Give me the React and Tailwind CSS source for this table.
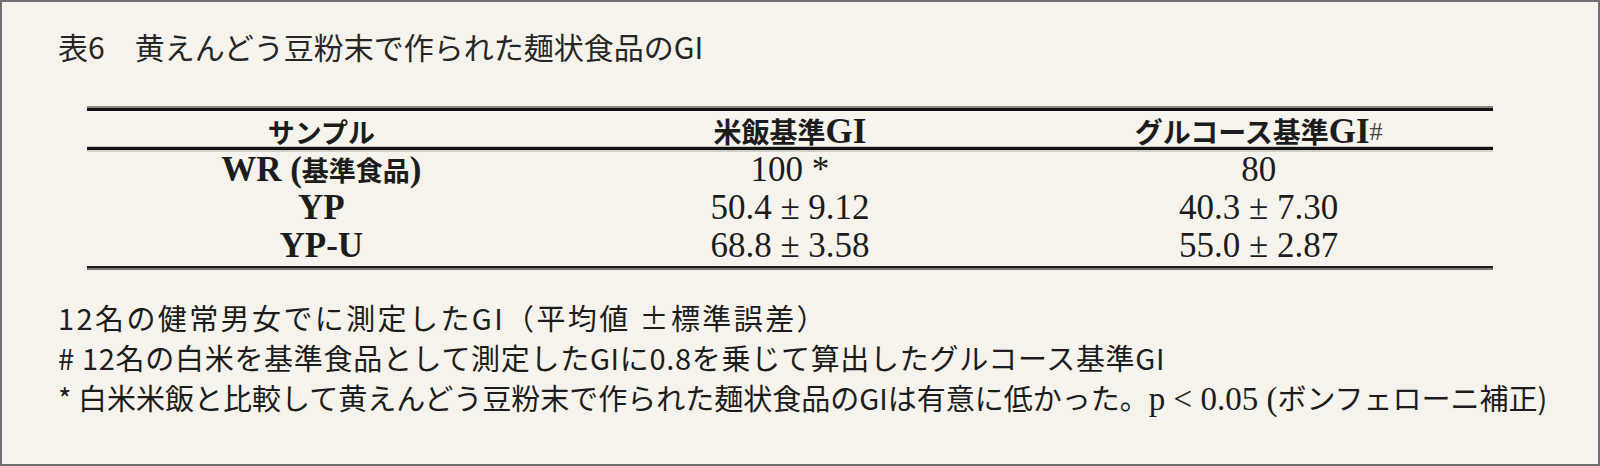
const serif = "[font-family:'Liberation_Serif','Noto_Sans_CJK_JP',serif]";
const gothic = "[font-family:'Noto_Sans_CJK_JP',sans-serif]";

const rows = [
    { label: <>WR <span className="text-[35px]">(</span><span className={`${gothic} text-[27px]`}>基準食品</span><span>)</span></>, rice: "100 *", glucose: "80" },
    { label: "YP", rice: "50.4 ± 9.12", glucose: "40.3 ± 7.30" },
    { label: "YP-U", rice: "68.8 ± 3.58", glucose: "55.0 ± 2.87" },
];

const Rule = ({ parts }) => (
    <div className="flex flex-col">
        {parts.map(([h, c], i) => <div key={i} className={`${h} ${c}`}/>)}
    </div>
);

export default function App() {
    return (
        <div className="w-[1600px] h-[466px] bg-[#f5f3eb] border-2 border-[#6f6f6f] text-[#1c1c1c]">
            <div className={`${gothic} text-[30px] leading-[30px] pl-[56px] pt-[29px] text-[#262626]`}>
                表6　黄えんどう豆粉末で作られた麺状食品のGI
            </div>

            <div className="ml-[85px] mt-[45px] w-[1406px]">
                <Rule parts={[["h-[2px]", "bg-[#8a8880]"], ["h-[3px]", "bg-[#121212]"]]}/>
                <div className="grid grid-cols-3 h-[35px] items-center pt-[3px] font-bold">
                    <div className={`${gothic} text-center text-[27px] leading-none`}>サンプル</div>
                    <div className={`${serif} text-center text-[35px] leading-none`}>
                        <span className={`${gothic} text-[28px]`}>米飯基準</span>GI
                    </div>
                    <div className={`${serif} text-center text-[35px] leading-none`}>
                        <span className={`${gothic} text-[28px]`}>グルコース基準</span>GI<span className="text-[26px] font-normal text-[#444] relative -top-[3px]">#</span>
                    </div>
                </div>
                <Rule parts={[["h-[1px]", "bg-[#c9c7be]"], ["h-[3px]", "bg-[#121212]"], ["h-[2px]", "bg-[#d0cec5]"]]}/>
                <div className={`${serif} text-[35px]`}>
                    {rows.map((r, i) => (
                        <div key={i} className="grid grid-cols-3 h-[38px] items-center pb-[5px] leading-none">
                            <div className="text-center font-bold">{r.label}</div>
                            <div className="text-center">{r.rice}</div>
                            <div className="text-center">{r.glucose}</div>
                        </div>
                    ))}
                </div>
                <Rule parts={[["h-[2px]", "bg-[#1a1a1a]"], ["h-[2px]", "bg-[#77766f]"]]}/>
            </div>

            <div className={`${gothic} text-[29px] leading-[40px] pl-[56px] mt-[27px]`}>
                <div className="tracking-[2.4px]">12名の健常男女でに測定したGI（平均値 ±標準誤差）</div>
                <div className="tracking-[0.7px]"># 12名の白米を基準食品として測定したGIに0.8を乗じて算出したグルコース基準GI</div>
                <div>
                    * 白米米飯と比較して黄えんどう豆粉末で作られた麺状食品のGIは有意に低かった。
                    <span className={`${serif} text-[33px]`}>p &lt; 0.05 (</span>ボンフェローニ補正)
                </div>
            </div>
        </div>
    );
}
